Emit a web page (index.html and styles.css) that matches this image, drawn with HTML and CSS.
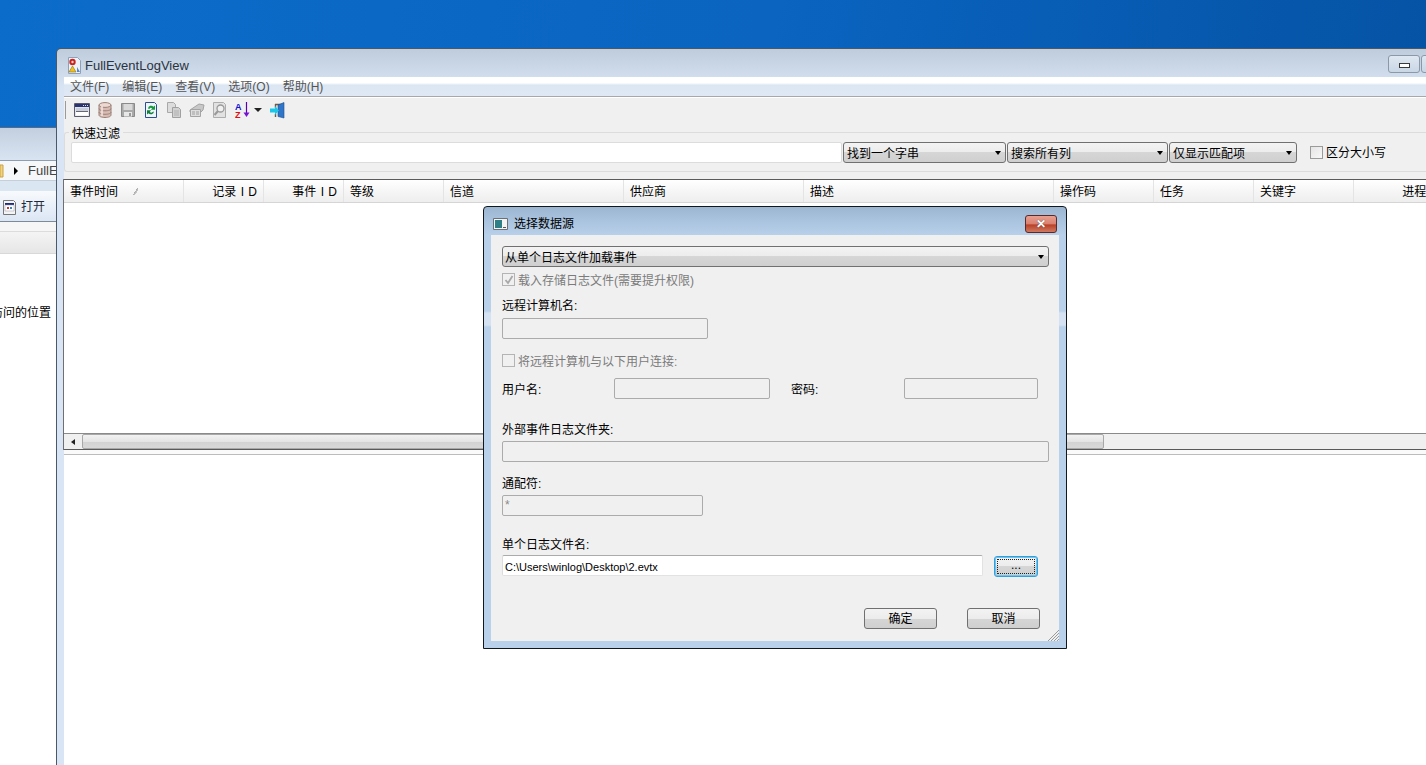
FILE: index.html
```html
<!DOCTYPE html>
<html lang="zh-CN">
  <head>
    <meta charset="UTF-8" />
    <title>FullEventLogView</title>
    <link rel="stylesheet" href="styles.css">
  </head>
  <body>
    <!-- explorer window behind the app -->
    <div class="BackWindow">
      <div class="BackTitle"></div>
      <div class="BackAddress">
        <svg class="BackFolder" width="4" height="15" viewBox="0 0 4 15"><path d="M0 2h3v12H0z" fill="#f3d27a" stroke="#c9a24a"/></svg>
        <span class="BackArrow"></span>
        <span class="BackPath">FullEventLogView</span>
      </div>
      <div class="BackGap"></div>
      <div class="BackTools">
        <svg width="15" height="15" viewBox="0 0 15 15"><path d="M1.500 .5h10l2 2v12h-12z" fill="#f4f4f4" stroke="#777"/><path d="M3 3h9v2H3z" fill="#1c2c78"/><path d="M3 5h9v6H3z" fill="#fff" stroke="#99a"  stroke-width=".5"/><path d="M5 7h2v2H5z" fill="#c33"/><path d="M8 7h2v2H8z" fill="#38c"/></svg>
        <span class="BackOpen">打开</span>
      </div>
      <div class="BackGap2"></div>
      <div class="BackHead"></div>
      <div class="BackBody"><span class="BackItem">最近访问的位置</span></div>
    </div>

    <!-- main app -->
    <div class="AppWindow">
      <div class="AppTitle">
        <svg width="14" height="17" viewBox="0 0 14 17"><path d="M1.500 .5h9l3 3v13h-12z" fill="#eef2f8" stroke="#8fa0b8"/><circle cx="5.500" cy="5" r="3.200" fill="#c8231f"/><circle cx="5.500" cy="5" r="1.200" fill="#f5d0c8"/><path d="M5.500 9l3.500 6H2z" fill="#f0c020" stroke="#8a7010" stroke-width=".6"/><path d="M10 10l3 5h-3z" fill="#5a86c8"/></svg>
        <span class="AppName">FullEventLogView</span>
        <div class="Caption">
          <div class="CapBtn"><span class="MinGlyph"></span></div>
          <div class="CapBtn"></div>
        </div>
      </div>
      <div class="AppInner">
        <ul class="Menu">
          <li>文件(F)</li>
          <li>编辑(E)</li>
          <li>查看(V)</li>
          <li>选项(O)</li>
          <li>帮助(H)</li>
        </ul>
        <div class="Toolbar">
          <span class="Grip"></span>
          <svg class="Tool" width="16" height="16" viewBox="0 0 16 16"><path d="M.5 1.500h15v13H.500z" fill="#dfe3ea" stroke="#5a5a6c"/><path d="M1 2h14v3H1z" fill="#2a3570"/><path d="M9 3h1v1H9zM11 3h1v1h-1zM13 3h1v1h-1z" fill="#dde"/><path d="M2 6h12v3H2z" fill="#c9d0da"/><path d="M2 9.500h12v4H2z" fill="#fff"/><path d="M2 9h12v1H2z" fill="#667"/></svg>
          <svg class="Tool" width="16" height="16" viewBox="0 0 16 16"><path d="M2 3v10c0 1.500 2.500 2.500 6 2.500s6-1 6-2.500V3z" fill="#d8bcb4" stroke="#9a8078"/><ellipse cx="8" cy="3" rx="6" ry="2.400" fill="#eed9d2" stroke="#9a8078"/><path d="M2 6.500c0 1.500 2.500 2.300 6 2.300s6-.8 6-2.300M2 10c0 1.500 2.500 2.300 6 2.300s6-.8 6-2.300" fill="none" stroke="#9a8078"/><path d="M5 4v10" stroke="#f4e6e2" stroke-width="1.500"/></svg>
          <svg class="Tool" width="16" height="16" viewBox="0 0 16 16"><path d="M1.500 1.500h13v13h-13z" fill="#a9a9a9" stroke="#8a8a8a"/><path d="M3.500 2h9v6h-9z" fill="#d9d9d9"/><path d="M4 10h8v4.500H4z" fill="#e8e8e8"/><path d="M9 11h2v3H9z" fill="#999"/></svg>
          <svg class="Tool" width="16" height="16" viewBox="0 0 16 16"><path d="M2.500 .5h9l2 2v13h-11z" fill="#eef4fb" stroke="#2b4f8e"/><path d="M5 6.500a3.200 3.200 0 0 1 5.500-1.800L12 3.500v4.200H7.800l1.400-1.400A1.800 1.800 0 0 0 6.400 7z" fill="#169a3c"/><path d="M11 9.500a3.200 3.200 0 0 1-5.500 1.800L4 12.500V8.300h4.200l-1.400 1.400a1.800 1.800 0 0 0 2.800.3z" fill="#12803a"/></svg>
          <svg class="Tool" width="16" height="16" viewBox="0 0 16 16"><path d="M1.500 .5h6l2 2v8h-8z" fill="#dcdcdc" stroke="#a8a8a8"/><path d="M6.500 5.500h6l2 2v8h-8z" fill="#d2d2d2" stroke="#a0a0a0"/><path d="M8 9h5M8 11h5M8 13h5" stroke="#b0b0b0"/></svg>
          <svg class="Tool" width="16" height="16" viewBox="0 0 16 16"><path d="M1 8l9-6 5 1-1 5-2 2H1z" fill="#c8c8c8" stroke="#a4a4a4"/><path d="M1.500 7.500h10v7h-10z" fill="#dedede" stroke="#a4a4a4"/><path d="M3 10h3M3 12h3M7 10h3M7 12h3" stroke="#a0a0a0"/></svg>
          <svg class="Tool" width="16" height="16" viewBox="0 0 16 16"><path d="M1.500 .5h10l2 2v13h-12z" fill="#e2e2e2" stroke="#adadad"/><circle cx="8.500" cy="6.500" r="3.500" fill="#f0f0f0" stroke="#9a9a9a" stroke-width="1.300"/><path d="M6 9l-3.500 4" stroke="#9a9a9a" stroke-width="2"/></svg>
          <svg class="Tool Sort" width="16" height="16" viewBox="0 0 16 16"><text x="0" y="7.500" class="SortA">A</text><text x="0" y="15.500" class="SortZ">Z</text><path d="M11.500 0v12" stroke="#5a00b0" stroke-width="1.200"/><path d="M8.500 10.500h6l-3 4.500z" fill="#7a10d8"/></svg>
          <span class="ToolDrop"></span>
          <svg class="Tool Exit" width="16" height="17" viewBox="0 0 16 17"><path d="M5 2.500h8M5.500 2v4M5.500 12v3" stroke="#6e5a48" stroke-width="1.400" fill="none"/><path d="M8 3l6-2.500V16l-6-1.500z" fill="#2f76c8" stroke="#1d4f92" stroke-width=".6"/><path d="M0 6.500h5V4l4 4.500-4 4.500v-2.500H0z" fill="#19c8e8"/></svg>
        </div>
        <div class="Filter">
          <span class="FilterTitle">快速过滤</span>
          <div class="FilterRow">
            <div class="Field FilterInput"></div>
            <div class="Combo ComboA">找到一个字串</div>
            <div class="Combo ComboB">搜索所有列</div>
            <div class="Combo ComboC">仅显示匹配项</div>
            <span class="Check CaseBox"></span>
            <span class="CaseText">区分大小写</span>
          </div>
        </div>
        <div class="Table">
          <div class="Head">
            <div class="Col W120">事件时间<span class="SortMark"></span></div>
            <div class="Col W80 Right">记录 I D</div>
            <div class="Col W80 Right">事件 I D</div>
            <div class="Col W100">等级</div>
            <div class="Col W180">信道</div>
            <div class="Col W180">供应商</div>
            <div class="Col W250">描述</div>
            <div class="Col W100">操作码</div>
            <div class="Col W100">任务</div>
            <div class="Col W100">关键字</div>
            <div class="Col W100 Right">进程 I D</div>
          </div>
          <div class="Rows"></div>
          <div class="HScroll">
            <div class="ScrollBtn"><span class="ScrollLeft"></span></div>
            <div class="ScrollThumb"></div>
          </div>
        </div>
        <div class="Splitter"></div>
        <div class="Lower"></div>
      </div>
    </div>

    <!-- select data source dialog -->
    <div class="Dialog">
      <div class="DialogTitle">
        <svg width="15" height="12" viewBox="0 0 15 12"><path d="M.5 .5h14v11H.500z" fill="#f2f4f4" stroke="#6a6f78"/><path d="M2 2h7v8H2z" fill="#2f7f86"/><path d="M10 9h3v1h-3z" fill="#555"/></svg>
        <span class="DialogName">选择数据源</span>
        <div class="CloseBtn"><span class="CloseX">✕</span></div>
      </div>
      <div class="DialogBody">
        <div class="Combo BigCombo">从单个日志文件加载事件</div>
        <div class="CheckRow Top6 Off">
          <span class="Check CheckOff"><svg width="10" height="10" viewBox="0 0 10 10"><path d="M1.500 5l2.500 3 4.500-7" fill="none" stroke="#a8a8a8" stroke-width="1.800"/></svg></span>
          载入存储日志文件(需要提升权限)
        </div>
        <div class="Label Top11">远程计算机名:</div>
        <div class="Field Off W206 Top6"></div>
        <div class="CheckRow Top15 Off">
          <span class="Check CheckOff"></span>
          将远程计算机与以下用户连接:
        </div>
        <div class="UserRow">
          <span class="Label">用户名:</span>
          <div class="Field Off"></div>
          <span class="Label">密码:</span>
          <div class="Field Off"></div>
        </div>
        <div class="Label Top23">外部事件日志文件夹:</div>
        <div class="Field Off Top5"></div>
        <div class="Label Top14">通配符:</div>
        <div class="Field Off W201 Top5 Star">*</div>
        <div class="Label Top21">单个日志文件名:</div>
        <div class="FileRow">
          <div class="Field FileInput">C:\Users\winlog\Desktop\2.evtx</div>
          <div class="Button Focus"><span class="Dots">...</span></div>
        </div>
        <div class="Actions">
          <div class="Button Act">确定</div>
          <div class="Button Act">取消</div>
        </div>
        <svg class="Resize" width="12" height="12" viewBox="0 0 12 12"><path d="M12 1L1 12M12 4L4 12M12 7L7 12M12 10l-2 2" stroke="#9a9a9a" fill="none"/></svg>
      </div>
    </div>
  </body>
</html>
```

FILE: styles.css
```css
* {
  box-sizing: border-box;
}
html,
body {
  height: 100%;
}
body {
  margin: 0;
  overflow: hidden;
  position: relative;
  font-family: "Liberation Sans", "Noto Sans CJK SC", sans-serif;
  font-size: 12px;
  line-height: 14px;
  color: #000;
  background: linear-gradient(100deg, #0c6cca 0%, #0a64c0 50%, #0450a0 100%);
}

/* back window */
.BackWindow {
  position: absolute;
  left: 0;
  top: 127px;
  width: 57px;
  height: 638px;
  overflow: hidden;
  display: flex;
  flex-direction: column;
  border-top: 1px solid #5a6a80;
  background: #fff;
}
.BackTitle {
  height: 32px;
  flex: none;
  background: linear-gradient(#c3cfde, #d8e4f2);
}
.BackAddress {
  height: 21px;
  flex: none;
  display: flex;
  align-items: center;
  background: #f6f7f9;
  border-top: 1px solid #8e9db0;
  border-bottom: 1px solid #c5cfda;
  white-space: nowrap;
  color: #444;
}
.BackFolder {
  flex: none;
}
.BackArrow {
  flex: none;
  margin-left: 10px;
  border-left: 4px solid #000;
  border-top: 4px solid transparent;
  border-bottom: 4px solid transparent;
}
.BackPath {
  margin-left: 10px;
  font-size: 13px;
}
.BackGap {
  height: 10px;
  flex: none;
  background: #dbe6f3;
}
.BackTools {
  height: 31px;
  flex: none;
  display: flex;
  align-items: center;
  padding: 2px 0 0 2px;
  gap: 4px;
  white-space: nowrap;
  background: linear-gradient(#f8fafd, #dbe6f4);
  border-bottom: 1px solid #7e8a98;
}
.BackOpen {
  color: #1e2a3a;
}
.BackGap2 {
  height: 10px;
  flex: none;
  background: #f6f6f6;
  border-bottom: 1px solid #dcdcdc;
}
.BackHead {
  height: 22px;
  flex: none;
  background: linear-gradient(#f4f4f4, #e6e6e6);
  border-bottom: 1px solid #d8d8d8;
}
.BackBody {
  flex: 1;
  display: flex;
  justify-content: flex-end;
  padding: 52px 6px 0 0;
  white-space: nowrap;
}
.BackItem {
  flex: none;
}

/* app window */
.AppWindow {
  position: absolute;
  left: 56px;
  top: 48px;
  width: 1400px;
  height: 740px;
  display: flex;
  flex-direction: column;
  border: 1px solid #4a5868;
  border-bottom: 0;
  border-radius: 5px 5px 0 0;
  background: linear-gradient(#bfccdb, #d9e5f4 40px);
}
.AppTitle {
  height: 28px;
  flex: none;
  display: flex;
  align-items: center;
  padding: 5px 0 0 10px;
  gap: 4px;
}
.AppName {
  font-size: 13px;
  color: #2a3440;
}
.Caption {
  margin-left: auto;
  margin-right: 2px;
  margin-top: -3px;
  display: flex;
  gap: 1px;
}
.CapBtn {
  width: 32px;
  height: 18px;
  display: flex;
  align-items: center;
  justify-content: center;
  border: 1px solid #8a98a8;
  border-radius: 3px;
  background: linear-gradient(#dfe8f2, #c9d6e4);
}
.MinGlyph {
  width: 11px;
  height: 5px;
  margin-top: 3px;
  background: #fff;
  border: 1px solid #3a3a3a;
}
.AppInner {
  flex: 1;
  display: flex;
  flex-direction: column;
  margin-left: 7px;
  min-height: 0;
  background: #f0f0f0;
}
.Menu {
  list-style-type: none;
  margin: 0;
  height: 20px;
  flex: none;
  padding: 1px 0 0 6px;
  display: flex;
  gap: 13px;
  align-items: center;
  color: #555;
  background: linear-gradient(#fff 0, #fff 6px, #dce6f3 8px, #dfe8f4 100%);
  border-bottom: 1px solid #a8a8a8;
}
.Toolbar {
  height: 28px;
  flex: none;
  display: flex;
  align-items: center;
  background: #f0f0f0;
  border-top: 1px solid #fff;
  padding: 0 0 3px 1px;
  gap: 7px;
}
.Grip {
  width: 1px;
  height: 18px;
  margin-right: 1px;
  background: #9a9a9a;
}
.Tool {
  flex: none;
}
.SortA,
.SortZ {
  font-family: "Liberation Sans", sans-serif;
  font-size: 9px;
  font-weight: bold;
}
.SortA {
  fill: #1010d0;
}
.SortZ {
  fill: #e01010;
}
.ToolDrop {
  margin-left: -4px;
  border-top: 4px solid #222;
  border-left: 4px solid transparent;
  border-right: 4px solid transparent;
}
.Exit {
  margin-left: 1px;
}

/* shared controls */
.Field {
  height: 21px;
  border: 1px solid #ababab;
  border-radius: 2px;
  background: #f0f0f0;
  padding: 4px 2px 2px;
  font-size: 11px;
  line-height: 14px;
}
.Off {
  color: #7b7b7b;
}
.Combo {
  position: relative;
  flex: none;
  height: 21px;
  margin-left: 1px;
  padding: 4px 3px 2px;
  border: 1px solid #707070;
  border-radius: 3px;
  background: linear-gradient(#f3f3f3 0, #ececec 50%, #d6d6d6 50%, #cfcfcf 100%);
}
.Combo::after {
  content: "";
  position: absolute;
  right: 4px;
  top: 8px;
  border-top: 4px solid #000;
  border-left: 3.500px solid transparent;
  border-right: 3.500px solid transparent;
}
.Check {
  flex: none;
  width: 13px;
  height: 13px;
  display: inline-flex;
  align-items: center;
  justify-content: center;
  border: 1px solid #9a9a9a;
  background: linear-gradient(135deg, #e4e4e4, #f8f8f8);
}
.Button {
  display: flex;
  align-items: center;
  justify-content: center;
  height: 21px;
  padding-top: 1px;
  border: 1px solid #707070;
  border-radius: 3px;
  background: linear-gradient(#f3f3f3 0, #ececec 50%, #d6d6d6 50%, #cfcfcf 100%);
}

/* filter group */
.Filter {
  position: relative;
  height: 40px;
  flex: none;
  margin-top: 7px;
  padding: 9px 0 0 6px;
  border: 1px solid #dcdcdc;
  border-right: 0;
  border-radius: 3px 0 0 3px;
  background: #f0f0f0;
}
.FilterTitle {
  position: absolute;
  left: 4px;
  top: -6px;
  padding: 0 3px;
  background: #f0f0f0;
}
.FilterRow {
  display: flex;
  align-items: center;
  white-space: nowrap;
}
.FilterInput {
  width: 771px;
  flex: none;
  background: #fff;
  border-color: #dcdcdc;
}
.ComboA {
  width: 163px;
}
.ComboB {
  width: 161px;
}
.ComboC {
  width: 128px;
}
.CaseBox {
  margin-left: 13px;
}
.CaseText {
  margin-left: 3px;
}

/* list */
.Table {
  margin-top: 7px;
  height: 271px;
  flex: none;
  display: flex;
  flex-direction: column;
  background: #fff;
  border-top: 1px solid #5a5a5a;
  border-bottom: 1px solid #5a5a5a;
  box-shadow: -1px 0 0 #707070;
}
.Head {
  height: 23px;
  display: flex;
  background: linear-gradient(#fff, #f6f6f6 50%, #eeeeee);
  border-bottom: 1px solid #d5d5d5;
  flex: none;
}
.Col {
  position: relative;
  flex: none;
  padding: 5px 6px 3px;
  border-right: 1px solid #e4e4e4;
  white-space: nowrap;
  word-spacing: 1px;
}
.Right {
  text-align: right;
}
.W80 {
  width: 80px;
}
.W100 {
  width: 100px;
}
.W120 {
  width: 120px;
}
.W180 {
  width: 180px;
}
.W250 {
  width: 250px;
}
.SortMark {
  position: absolute;
  left: 69px;
  top: 8px;
  width: 5px;
  height: 7px;
  background: linear-gradient(125deg, transparent 45%, #aaa 45%, #ccc 70%, transparent 70%);
}
.Rows {
  flex: 1;
}
.HScroll {
  height: 16px;
  flex: none;
  display: flex;
  background: #f0f0f0;
  border-top: 1px solid #8a8a8a;
}
.ScrollBtn {
  width: 18px;
  display: flex;
  align-items: center;
  justify-content: center;
}
.ScrollLeft {
  border-right: 4px solid #222;
  border-top: 3px solid transparent;
  border-bottom: 3px solid transparent;
}
.ScrollThumb {
  width: 1022px;
  border: 1px solid #a8a8a8;
  border-radius: 2px;
  background: linear-gradient(#f2f2f2 0, #e4e4e4 50%, #d2d2d2 50%, #d8d8d8 100%);
}
.Splitter {
  height: 5px;
  flex: none;
  background: #fafafa;
  border-bottom: 1px solid #bcbcbc;
}
.Lower {
  flex: 1;
  background: #fff;
}

/* dialog */
.Dialog {
  position: absolute;
  left: 483px;
  top: 206px;
  width: 584px;
  height: 443px;
  display: flex;
  flex-direction: column;
  border: 1px solid #10181c;
  border-radius: 4px 4px 0 0;
  padding: 0 7px 7px 7px;
  background: linear-gradient(#9cb6d2 0, #b8d0ea 28px, #b9d1ea 104px, #d4e2f3 106px, #d4e2f3 118px, #b9d1ea 120px);
}
.DialogTitle {
  height: 28px;
  flex: none;
  display: flex;
  align-items: center;
  gap: 6px;
  padding: 5px 2px 0 2px;
}
.CloseBtn {
  margin-left: auto;
  width: 32px;
  height: 18px;
  display: flex;
  align-items: center;
  justify-content: center;
  border: 1px solid #5a2a2a;
  border-radius: 3px;
  background: linear-gradient(#e8a090 0, #d88070 50%, #b84028 55%, #d07a60 100%);
  overflow: hidden;
}
.CloseX {
  color: #fff;
  font-size: 12px;
  font-weight: bold;
  line-height: 12px;
  text-shadow: 0 0 1px #333;
}
.DialogBody {
  position: relative;
  flex: 1;
  display: flex;
  flex-direction: column;
  padding: 11px 10px 0 11px;
  background: #f0f0f0;
}
.BigCombo {
  margin-left: 0;
  padding-left: 2px;
}
.CheckRow {
  height: 14px;
  display: flex;
  align-items: flex-start;
  line-height: 16px;
  gap: 3px;
}
.Top5 {
  margin-top: 5px;
}
.Top6 {
  margin-top: 6px;
}
.Top11 {
  margin-top: 11px;
}
.Top14 {
  margin-top: 14px;
}
.Top15 {
  margin-top: 15px;
}
.Top21 {
  margin-top: 21px;
}
.Top23 {
  margin-top: 23px;
}
.CheckOff {
  border-color: #b4b4b4;
  background: #f0f0f0;
}
.Label {
  height: 14px;
  line-height: 16px;
}
.W206 {
  width: 206px;
}
.W201 {
  width: 201px;
}
.UserRow {
  margin-top: 10px;
  width: 536px;
  display: grid;
  grid-template-columns: 112px 156px 21px 113px 134px;
  align-items: center;
}
.UserRow .Label:nth-child(3) {
  grid-column: 4;
}
.Star {
  color: #888;
  font-size: 12px;
  padding-top: 2px;
}
.FileRow {
  margin-top: 4px;
  display: flex;
  gap: 11px;
}
.FileInput {
  width: 481px;
  background: #fff;
  border-color: #ababab #e2e2e2 #e2e2e2 #dcdcdc;
}
.Focus {
  width: 44px;
  margin-top: 1px;
  border: 1px solid #2f9fe0;
  box-shadow: 0 0 0 1px #6fc4ee inset;
  padding: 2px;
}
.Dots {
  flex: 1;
  height: 100%;
  text-align: center;
  border: 1px dotted #222;
  line-height: 11px;
}
.Actions {
  margin-top: 31px;
  padding-right: 9px;
  display: flex;
  justify-content: flex-end;
  gap: 30px;
}
.Act {
  width: 73px;
}
.Resize {
  position: absolute;
  right: 0;
  bottom: 0;
}
```
